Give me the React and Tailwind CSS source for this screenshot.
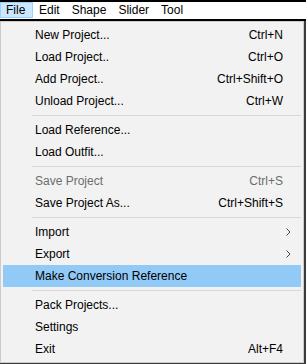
const items = [
  { label: 'New Project...', key: 'Ctrl+N' },
  { label: 'Load Project..', key: 'Ctrl+O' },
  { label: 'Add Project..', key: 'Ctrl+Shift+O' },
  { label: 'Unload Project...', key: 'Ctrl+W' },
  { sep: true },
  { label: 'Load Reference...' },
  { label: 'Load Outfit...' },
  { sep: true },
  { label: 'Save Project', key: 'Ctrl+S', disabled: true },
  { label: 'Save Project As...', key: 'Ctrl+Shift+S' },
  { sep: true },
  { label: 'Import', sub: true },
  { label: 'Export', sub: true },
  { label: 'Make Conversion Reference', active: true },
  { sep: true },
  { label: 'Pack Projects...' },
  { label: 'Settings' },
  { label: 'Exit', key: 'Alt+F4' },
];

const Chevron = () => (
  <svg width="5" height="8" viewBox="0 0 5 8" className="text-[#444]">
    <path d="M0.5 0.5 L4 4 L0.5 7.5" fill="none" stroke="currentColor" strokeWidth="1" />
  </svg>
);

export default function App() {
  return (
    <div
      className="w-[306px] h-[364px] bg-[#3a3a3a] overflow-hidden text-[12px] text-black"
      style={{ fontFamily: '"Liberation Sans", Arial, sans-serif' }}
    >
      <div className="h-[2px] bg-black" />
      <div className="h-[17px] bg-white flex items-start">
        <div className="h-[16px] w-[33px] bg-[#cce8ff] border border-[#99d1ff] flex items-center pl-[5px]">File</div>
        <div className="h-[16px] flex items-center pl-[6px]">Edit</div>
        <div className="h-[16px] flex items-center pl-[12px]">Shape</div>
        <div className="h-[16px] flex items-center pl-[12px]">Slider</div>
        <div className="h-[16px] flex items-center pl-[12px]">Tool</div>
      </div>
      <div className="h-[2px] bg-black" />
      <div className="w-[304px] h-[342px] bg-[#f2f2f2] border border-[#cccccc] py-[2px] px-[2px]">
        {items.map((it, i) =>
          it.sep ? (
            <div key={i} className="h-[7px] flex items-center pl-[29px]">
              <div className="h-px w-full bg-[#d7d7d7]" />
            </div>
          ) : (
            <div
              key={i}
              className={`h-[22px] flex items-center pl-[32px] pr-[18px] ${it.active ? 'bg-[#91c9f7]' : ''} ${it.disabled ? 'text-[#6d6d6d]' : ''}`}
            >
              <span className="flex-1">{it.label}</span>
              {it.key && <span>{it.key}</span>}
              {it.sub && <span className="mr-[-8px]"><Chevron /></span>}
            </div>
          )
        )}
      </div>
    </div>
  );
}
